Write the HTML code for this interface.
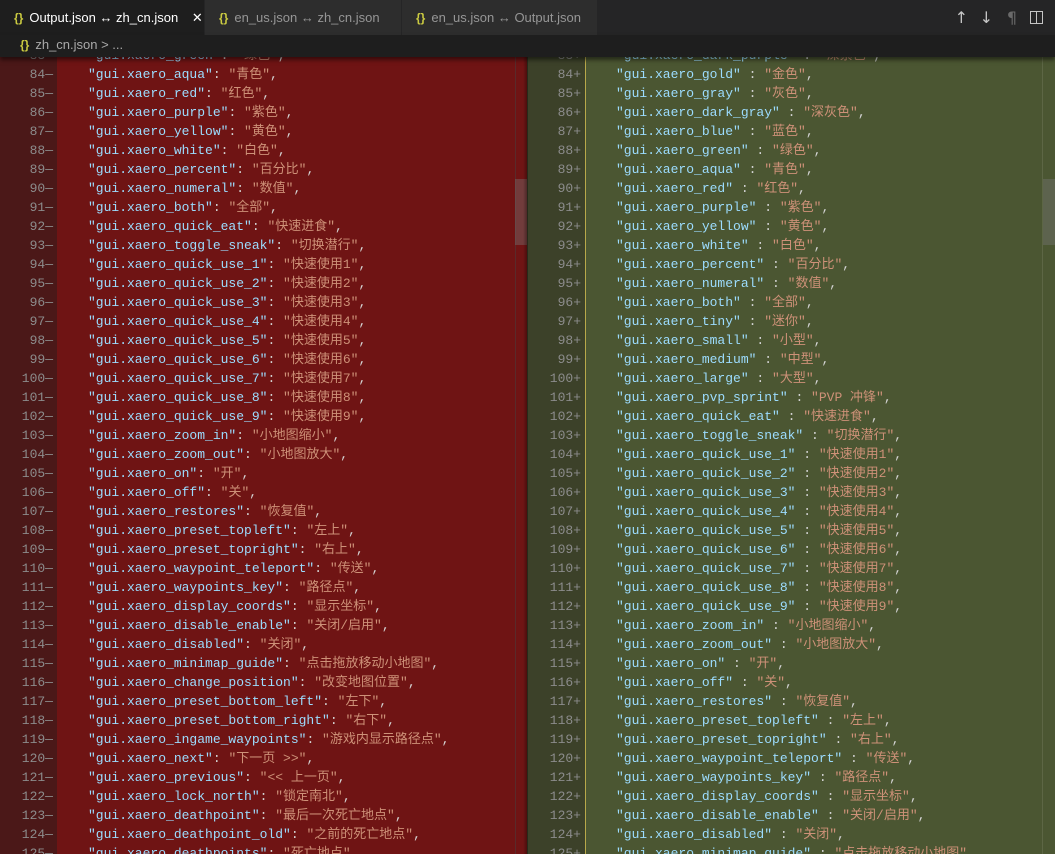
<!DOCTYPE html>
<html><head><meta charset="utf-8"><style>
*{margin:0;padding:0;box-sizing:border-box}
body{width:1055px;height:854px;overflow:hidden;background:#1e1e1e;position:relative;font-family:"Liberation Mono","Noto Sans CJK SC",monospace}
.tabs{position:absolute;left:0;top:0;width:1055px;height:35px;background:#252526}
.tab{position:absolute;top:0;height:35px;background:#2d2d2d;color:#969696;font:13px "Liberation Sans",sans-serif;line-height:35px;padding-left:14px;border-right:1px solid #252526}
.tab.a{background:#1e1e1e;color:#fff}
.br{color:#cbcb41;font-weight:bold;margin-right:6px;font-size:12px}
.crumb{position:absolute;left:0;top:35px;width:1055px;height:22px;background:#1e1e1e;color:#a9a9a9;font:13px "Liberation Sans",sans-serif;line-height:20px;padding-left:20px;z-index:3;box-shadow:0 3px 4px rgba(0,0,0,.5)}
.icons{position:absolute;right:0;top:0;height:35px;color:#c5c5c5;font:16px "DejaVu Sans",sans-serif;line-height:35px}
.pane{position:absolute;top:57px;height:797px;overflow:hidden}
.lines{position:absolute;top:-11px;left:0;right:0}
.l{height:19px;line-height:19px;font-size:13px;white-space:pre;position:relative}
.n{position:absolute;text-align:right;color:#8c8c8c}
.k{color:#9cdcfe}.v{color:#ce9178}.p{color:#d4d4d4}
</style></head><body>
<div class="tabs">
<div class="tab a" style="left:0;width:205px"><span class="br">{}</span>Output.json ↔ zh_cn.json <span style="margin-left:10px">✕</span></div>
<div class="tab" style="left:205px;width:197px"><span class="br">{}</span>en_us.json ↔ zh_cn.json</div>
<div class="tab" style="left:402px;width:196px"><span class="br">{}</span>en_us.json ↔ Output.json</div>
<div class="icons"><span style="position:absolute;right:87px">↑</span><span style="position:absolute;right:62px">↓</span><span style="position:absolute;right:38px;color:#6a6a6a">¶</span><span style="position:absolute;right:12px;top:11px;width:13px;height:13px;border:1.5px solid #c5c5c5"></span><span style="position:absolute;right:18px;top:11px;width:1.5px;height:13px;background:#c5c5c5"></span></div>
</div>
<div class="crumb"><span class="br">{}</span>zh_cn.json &gt; ...</div>

<div class="pane" style="left:0;width:527px;background:#6f1414">
<div style="position:absolute;left:0;top:0;width:57px;height:797px;background:#4b1818"></div>
<div style="position:absolute;left:515px;top:0;width:1px;height:797px;background:#5a2a2a"></div>
<div style="position:absolute;left:515px;top:122px;width:12px;height:66px;background:rgba(121,121,121,.4)"></div>
<div class="lines" style="left:0">
<div class="l"><span class="n" style="left:0;width:53px">83—</span><span style="position:absolute;left:88px"><span class="k">"gui.xaero_green"</span><span class="p">: </span><span class="v">"绿色"</span><span class="p">,</span></span></div>
<div class="l"><span class="n" style="left:0;width:53px">84—</span><span style="position:absolute;left:88px"><span class="k">"gui.xaero_aqua"</span><span class="p">: </span><span class="v">"青色"</span><span class="p">,</span></span></div>
<div class="l"><span class="n" style="left:0;width:53px">85—</span><span style="position:absolute;left:88px"><span class="k">"gui.xaero_red"</span><span class="p">: </span><span class="v">"红色"</span><span class="p">,</span></span></div>
<div class="l"><span class="n" style="left:0;width:53px">86—</span><span style="position:absolute;left:88px"><span class="k">"gui.xaero_purple"</span><span class="p">: </span><span class="v">"紫色"</span><span class="p">,</span></span></div>
<div class="l"><span class="n" style="left:0;width:53px">87—</span><span style="position:absolute;left:88px"><span class="k">"gui.xaero_yellow"</span><span class="p">: </span><span class="v">"黄色"</span><span class="p">,</span></span></div>
<div class="l"><span class="n" style="left:0;width:53px">88—</span><span style="position:absolute;left:88px"><span class="k">"gui.xaero_white"</span><span class="p">: </span><span class="v">"白色"</span><span class="p">,</span></span></div>
<div class="l"><span class="n" style="left:0;width:53px">89—</span><span style="position:absolute;left:88px"><span class="k">"gui.xaero_percent"</span><span class="p">: </span><span class="v">"百分比"</span><span class="p">,</span></span></div>
<div class="l"><span class="n" style="left:0;width:53px">90—</span><span style="position:absolute;left:88px"><span class="k">"gui.xaero_numeral"</span><span class="p">: </span><span class="v">"数值"</span><span class="p">,</span></span></div>
<div class="l"><span class="n" style="left:0;width:53px">91—</span><span style="position:absolute;left:88px"><span class="k">"gui.xaero_both"</span><span class="p">: </span><span class="v">"全部"</span><span class="p">,</span></span></div>
<div class="l"><span class="n" style="left:0;width:53px">92—</span><span style="position:absolute;left:88px"><span class="k">"gui.xaero_quick_eat"</span><span class="p">: </span><span class="v">"快速进食"</span><span class="p">,</span></span></div>
<div class="l"><span class="n" style="left:0;width:53px">93—</span><span style="position:absolute;left:88px"><span class="k">"gui.xaero_toggle_sneak"</span><span class="p">: </span><span class="v">"切换潜行"</span><span class="p">,</span></span></div>
<div class="l"><span class="n" style="left:0;width:53px">94—</span><span style="position:absolute;left:88px"><span class="k">"gui.xaero_quick_use_1"</span><span class="p">: </span><span class="v">"快速使用1"</span><span class="p">,</span></span></div>
<div class="l"><span class="n" style="left:0;width:53px">95—</span><span style="position:absolute;left:88px"><span class="k">"gui.xaero_quick_use_2"</span><span class="p">: </span><span class="v">"快速使用2"</span><span class="p">,</span></span></div>
<div class="l"><span class="n" style="left:0;width:53px">96—</span><span style="position:absolute;left:88px"><span class="k">"gui.xaero_quick_use_3"</span><span class="p">: </span><span class="v">"快速使用3"</span><span class="p">,</span></span></div>
<div class="l"><span class="n" style="left:0;width:53px">97—</span><span style="position:absolute;left:88px"><span class="k">"gui.xaero_quick_use_4"</span><span class="p">: </span><span class="v">"快速使用4"</span><span class="p">,</span></span></div>
<div class="l"><span class="n" style="left:0;width:53px">98—</span><span style="position:absolute;left:88px"><span class="k">"gui.xaero_quick_use_5"</span><span class="p">: </span><span class="v">"快速使用5"</span><span class="p">,</span></span></div>
<div class="l"><span class="n" style="left:0;width:53px">99—</span><span style="position:absolute;left:88px"><span class="k">"gui.xaero_quick_use_6"</span><span class="p">: </span><span class="v">"快速使用6"</span><span class="p">,</span></span></div>
<div class="l"><span class="n" style="left:0;width:53px">100—</span><span style="position:absolute;left:88px"><span class="k">"gui.xaero_quick_use_7"</span><span class="p">: </span><span class="v">"快速使用7"</span><span class="p">,</span></span></div>
<div class="l"><span class="n" style="left:0;width:53px">101—</span><span style="position:absolute;left:88px"><span class="k">"gui.xaero_quick_use_8"</span><span class="p">: </span><span class="v">"快速使用8"</span><span class="p">,</span></span></div>
<div class="l"><span class="n" style="left:0;width:53px">102—</span><span style="position:absolute;left:88px"><span class="k">"gui.xaero_quick_use_9"</span><span class="p">: </span><span class="v">"快速使用9"</span><span class="p">,</span></span></div>
<div class="l"><span class="n" style="left:0;width:53px">103—</span><span style="position:absolute;left:88px"><span class="k">"gui.xaero_zoom_in"</span><span class="p">: </span><span class="v">"小地图缩小"</span><span class="p">,</span></span></div>
<div class="l"><span class="n" style="left:0;width:53px">104—</span><span style="position:absolute;left:88px"><span class="k">"gui.xaero_zoom_out"</span><span class="p">: </span><span class="v">"小地图放大"</span><span class="p">,</span></span></div>
<div class="l"><span class="n" style="left:0;width:53px">105—</span><span style="position:absolute;left:88px"><span class="k">"gui.xaero_on"</span><span class="p">: </span><span class="v">"开"</span><span class="p">,</span></span></div>
<div class="l"><span class="n" style="left:0;width:53px">106—</span><span style="position:absolute;left:88px"><span class="k">"gui.xaero_off"</span><span class="p">: </span><span class="v">"关"</span><span class="p">,</span></span></div>
<div class="l"><span class="n" style="left:0;width:53px">107—</span><span style="position:absolute;left:88px"><span class="k">"gui.xaero_restores"</span><span class="p">: </span><span class="v">"恢复值"</span><span class="p">,</span></span></div>
<div class="l"><span class="n" style="left:0;width:53px">108—</span><span style="position:absolute;left:88px"><span class="k">"gui.xaero_preset_topleft"</span><span class="p">: </span><span class="v">"左上"</span><span class="p">,</span></span></div>
<div class="l"><span class="n" style="left:0;width:53px">109—</span><span style="position:absolute;left:88px"><span class="k">"gui.xaero_preset_topright"</span><span class="p">: </span><span class="v">"右上"</span><span class="p">,</span></span></div>
<div class="l"><span class="n" style="left:0;width:53px">110—</span><span style="position:absolute;left:88px"><span class="k">"gui.xaero_waypoint_teleport"</span><span class="p">: </span><span class="v">"传送"</span><span class="p">,</span></span></div>
<div class="l"><span class="n" style="left:0;width:53px">111—</span><span style="position:absolute;left:88px"><span class="k">"gui.xaero_waypoints_key"</span><span class="p">: </span><span class="v">"路径点"</span><span class="p">,</span></span></div>
<div class="l"><span class="n" style="left:0;width:53px">112—</span><span style="position:absolute;left:88px"><span class="k">"gui.xaero_display_coords"</span><span class="p">: </span><span class="v">"显示坐标"</span><span class="p">,</span></span></div>
<div class="l"><span class="n" style="left:0;width:53px">113—</span><span style="position:absolute;left:88px"><span class="k">"gui.xaero_disable_enable"</span><span class="p">: </span><span class="v">"关闭/启用"</span><span class="p">,</span></span></div>
<div class="l"><span class="n" style="left:0;width:53px">114—</span><span style="position:absolute;left:88px"><span class="k">"gui.xaero_disabled"</span><span class="p">: </span><span class="v">"关闭"</span><span class="p">,</span></span></div>
<div class="l"><span class="n" style="left:0;width:53px">115—</span><span style="position:absolute;left:88px"><span class="k">"gui.xaero_minimap_guide"</span><span class="p">: </span><span class="v">"点击拖放移动小地图"</span><span class="p">,</span></span></div>
<div class="l"><span class="n" style="left:0;width:53px">116—</span><span style="position:absolute;left:88px"><span class="k">"gui.xaero_change_position"</span><span class="p">: </span><span class="v">"改变地图位置"</span><span class="p">,</span></span></div>
<div class="l"><span class="n" style="left:0;width:53px">117—</span><span style="position:absolute;left:88px"><span class="k">"gui.xaero_preset_bottom_left"</span><span class="p">: </span><span class="v">"左下"</span><span class="p">,</span></span></div>
<div class="l"><span class="n" style="left:0;width:53px">118—</span><span style="position:absolute;left:88px"><span class="k">"gui.xaero_preset_bottom_right"</span><span class="p">: </span><span class="v">"右下"</span><span class="p">,</span></span></div>
<div class="l"><span class="n" style="left:0;width:53px">119—</span><span style="position:absolute;left:88px"><span class="k">"gui.xaero_ingame_waypoints"</span><span class="p">: </span><span class="v">"游戏内显示路径点"</span><span class="p">,</span></span></div>
<div class="l"><span class="n" style="left:0;width:53px">120—</span><span style="position:absolute;left:88px"><span class="k">"gui.xaero_next"</span><span class="p">: </span><span class="v">"下一页 &gt;&gt;"</span><span class="p">,</span></span></div>
<div class="l"><span class="n" style="left:0;width:53px">121—</span><span style="position:absolute;left:88px"><span class="k">"gui.xaero_previous"</span><span class="p">: </span><span class="v">"&lt;&lt; 上一页"</span><span class="p">,</span></span></div>
<div class="l"><span class="n" style="left:0;width:53px">122—</span><span style="position:absolute;left:88px"><span class="k">"gui.xaero_lock_north"</span><span class="p">: </span><span class="v">"锁定南北"</span><span class="p">,</span></span></div>
<div class="l"><span class="n" style="left:0;width:53px">123—</span><span style="position:absolute;left:88px"><span class="k">"gui.xaero_deathpoint"</span><span class="p">: </span><span class="v">"最后一次死亡地点"</span><span class="p">,</span></span></div>
<div class="l"><span class="n" style="left:0;width:53px">124—</span><span style="position:absolute;left:88px"><span class="k">"gui.xaero_deathpoint_old"</span><span class="p">: </span><span class="v">"之前的死亡地点"</span><span class="p">,</span></span></div>
<div class="l"><span class="n" style="left:0;width:53px">125—</span><span style="position:absolute;left:88px"><span class="k">"gui.xaero_deathpoints"</span><span class="p">: </span><span class="v">"死亡地点"</span><span class="p">,</span></span></div>
</div>
</div>

<div style="position:absolute;left:523px;top:57px;width:5px;height:797px;background:linear-gradient(90deg,rgba(0,0,0,0),rgba(0,0,0,.4));z-index:2"></div>

<div class="pane" style="left:527px;width:528px;background:#4b5632">
<div style="position:absolute;left:0;top:0;width:58px;height:797px;background:#3c4129"></div>
<div style="position:absolute;left:58px;top:0;width:1px;height:797px;background:#b8a84a"></div>
<div style="position:absolute;left:515px;top:0;width:1px;height:797px;background:#5d6645"></div>
<div style="position:absolute;left:516px;top:122px;width:12px;height:66px;background:rgba(121,121,121,.4)"></div>
<div class="lines">
<div class="l"><span class="n" style="left:0;width:54px">83+</span><span style="position:absolute;left:89px"><span class="k">"gui.xaero_dark_purple"</span><span class="p"> : </span><span class="v">"深紫色"</span><span class="p">,</span></span></div>
<div class="l"><span class="n" style="left:0;width:54px">84+</span><span style="position:absolute;left:89px"><span class="k">"gui.xaero_gold"</span><span class="p"> : </span><span class="v">"金色"</span><span class="p">,</span></span></div>
<div class="l"><span class="n" style="left:0;width:54px">85+</span><span style="position:absolute;left:89px"><span class="k">"gui.xaero_gray"</span><span class="p"> : </span><span class="v">"灰色"</span><span class="p">,</span></span></div>
<div class="l"><span class="n" style="left:0;width:54px">86+</span><span style="position:absolute;left:89px"><span class="k">"gui.xaero_dark_gray"</span><span class="p"> : </span><span class="v">"深灰色"</span><span class="p">,</span></span></div>
<div class="l"><span class="n" style="left:0;width:54px">87+</span><span style="position:absolute;left:89px"><span class="k">"gui.xaero_blue"</span><span class="p"> : </span><span class="v">"蓝色"</span><span class="p">,</span></span></div>
<div class="l"><span class="n" style="left:0;width:54px">88+</span><span style="position:absolute;left:89px"><span class="k">"gui.xaero_green"</span><span class="p"> : </span><span class="v">"绿色"</span><span class="p">,</span></span></div>
<div class="l"><span class="n" style="left:0;width:54px">89+</span><span style="position:absolute;left:89px"><span class="k">"gui.xaero_aqua"</span><span class="p"> : </span><span class="v">"青色"</span><span class="p">,</span></span></div>
<div class="l"><span class="n" style="left:0;width:54px">90+</span><span style="position:absolute;left:89px"><span class="k">"gui.xaero_red"</span><span class="p"> : </span><span class="v">"红色"</span><span class="p">,</span></span></div>
<div class="l"><span class="n" style="left:0;width:54px">91+</span><span style="position:absolute;left:89px"><span class="k">"gui.xaero_purple"</span><span class="p"> : </span><span class="v">"紫色"</span><span class="p">,</span></span></div>
<div class="l"><span class="n" style="left:0;width:54px">92+</span><span style="position:absolute;left:89px"><span class="k">"gui.xaero_yellow"</span><span class="p"> : </span><span class="v">"黄色"</span><span class="p">,</span></span></div>
<div class="l"><span class="n" style="left:0;width:54px">93+</span><span style="position:absolute;left:89px"><span class="k">"gui.xaero_white"</span><span class="p"> : </span><span class="v">"白色"</span><span class="p">,</span></span></div>
<div class="l"><span class="n" style="left:0;width:54px">94+</span><span style="position:absolute;left:89px"><span class="k">"gui.xaero_percent"</span><span class="p"> : </span><span class="v">"百分比"</span><span class="p">,</span></span></div>
<div class="l"><span class="n" style="left:0;width:54px">95+</span><span style="position:absolute;left:89px"><span class="k">"gui.xaero_numeral"</span><span class="p"> : </span><span class="v">"数值"</span><span class="p">,</span></span></div>
<div class="l"><span class="n" style="left:0;width:54px">96+</span><span style="position:absolute;left:89px"><span class="k">"gui.xaero_both"</span><span class="p"> : </span><span class="v">"全部"</span><span class="p">,</span></span></div>
<div class="l"><span class="n" style="left:0;width:54px">97+</span><span style="position:absolute;left:89px"><span class="k">"gui.xaero_tiny"</span><span class="p"> : </span><span class="v">"迷你"</span><span class="p">,</span></span></div>
<div class="l"><span class="n" style="left:0;width:54px">98+</span><span style="position:absolute;left:89px"><span class="k">"gui.xaero_small"</span><span class="p"> : </span><span class="v">"小型"</span><span class="p">,</span></span></div>
<div class="l"><span class="n" style="left:0;width:54px">99+</span><span style="position:absolute;left:89px"><span class="k">"gui.xaero_medium"</span><span class="p"> : </span><span class="v">"中型"</span><span class="p">,</span></span></div>
<div class="l"><span class="n" style="left:0;width:54px">100+</span><span style="position:absolute;left:89px"><span class="k">"gui.xaero_large"</span><span class="p"> : </span><span class="v">"大型"</span><span class="p">,</span></span></div>
<div class="l"><span class="n" style="left:0;width:54px">101+</span><span style="position:absolute;left:89px"><span class="k">"gui.xaero_pvp_sprint"</span><span class="p"> : </span><span class="v">"PVP 冲锋"</span><span class="p">,</span></span></div>
<div class="l"><span class="n" style="left:0;width:54px">102+</span><span style="position:absolute;left:89px"><span class="k">"gui.xaero_quick_eat"</span><span class="p"> : </span><span class="v">"快速进食"</span><span class="p">,</span></span></div>
<div class="l"><span class="n" style="left:0;width:54px">103+</span><span style="position:absolute;left:89px"><span class="k">"gui.xaero_toggle_sneak"</span><span class="p"> : </span><span class="v">"切换潜行"</span><span class="p">,</span></span></div>
<div class="l"><span class="n" style="left:0;width:54px">104+</span><span style="position:absolute;left:89px"><span class="k">"gui.xaero_quick_use_1"</span><span class="p"> : </span><span class="v">"快速使用1"</span><span class="p">,</span></span></div>
<div class="l"><span class="n" style="left:0;width:54px">105+</span><span style="position:absolute;left:89px"><span class="k">"gui.xaero_quick_use_2"</span><span class="p"> : </span><span class="v">"快速使用2"</span><span class="p">,</span></span></div>
<div class="l"><span class="n" style="left:0;width:54px">106+</span><span style="position:absolute;left:89px"><span class="k">"gui.xaero_quick_use_3"</span><span class="p"> : </span><span class="v">"快速使用3"</span><span class="p">,</span></span></div>
<div class="l"><span class="n" style="left:0;width:54px">107+</span><span style="position:absolute;left:89px"><span class="k">"gui.xaero_quick_use_4"</span><span class="p"> : </span><span class="v">"快速使用4"</span><span class="p">,</span></span></div>
<div class="l"><span class="n" style="left:0;width:54px">108+</span><span style="position:absolute;left:89px"><span class="k">"gui.xaero_quick_use_5"</span><span class="p"> : </span><span class="v">"快速使用5"</span><span class="p">,</span></span></div>
<div class="l"><span class="n" style="left:0;width:54px">109+</span><span style="position:absolute;left:89px"><span class="k">"gui.xaero_quick_use_6"</span><span class="p"> : </span><span class="v">"快速使用6"</span><span class="p">,</span></span></div>
<div class="l"><span class="n" style="left:0;width:54px">110+</span><span style="position:absolute;left:89px"><span class="k">"gui.xaero_quick_use_7"</span><span class="p"> : </span><span class="v">"快速使用7"</span><span class="p">,</span></span></div>
<div class="l"><span class="n" style="left:0;width:54px">111+</span><span style="position:absolute;left:89px"><span class="k">"gui.xaero_quick_use_8"</span><span class="p"> : </span><span class="v">"快速使用8"</span><span class="p">,</span></span></div>
<div class="l"><span class="n" style="left:0;width:54px">112+</span><span style="position:absolute;left:89px"><span class="k">"gui.xaero_quick_use_9"</span><span class="p"> : </span><span class="v">"快速使用9"</span><span class="p">,</span></span></div>
<div class="l"><span class="n" style="left:0;width:54px">113+</span><span style="position:absolute;left:89px"><span class="k">"gui.xaero_zoom_in"</span><span class="p"> : </span><span class="v">"小地图缩小"</span><span class="p">,</span></span></div>
<div class="l"><span class="n" style="left:0;width:54px">114+</span><span style="position:absolute;left:89px"><span class="k">"gui.xaero_zoom_out"</span><span class="p"> : </span><span class="v">"小地图放大"</span><span class="p">,</span></span></div>
<div class="l"><span class="n" style="left:0;width:54px">115+</span><span style="position:absolute;left:89px"><span class="k">"gui.xaero_on"</span><span class="p"> : </span><span class="v">"开"</span><span class="p">,</span></span></div>
<div class="l"><span class="n" style="left:0;width:54px">116+</span><span style="position:absolute;left:89px"><span class="k">"gui.xaero_off"</span><span class="p"> : </span><span class="v">"关"</span><span class="p">,</span></span></div>
<div class="l"><span class="n" style="left:0;width:54px">117+</span><span style="position:absolute;left:89px"><span class="k">"gui.xaero_restores"</span><span class="p"> : </span><span class="v">"恢复值"</span><span class="p">,</span></span></div>
<div class="l"><span class="n" style="left:0;width:54px">118+</span><span style="position:absolute;left:89px"><span class="k">"gui.xaero_preset_topleft"</span><span class="p"> : </span><span class="v">"左上"</span><span class="p">,</span></span></div>
<div class="l"><span class="n" style="left:0;width:54px">119+</span><span style="position:absolute;left:89px"><span class="k">"gui.xaero_preset_topright"</span><span class="p"> : </span><span class="v">"右上"</span><span class="p">,</span></span></div>
<div class="l"><span class="n" style="left:0;width:54px">120+</span><span style="position:absolute;left:89px"><span class="k">"gui.xaero_waypoint_teleport"</span><span class="p"> : </span><span class="v">"传送"</span><span class="p">,</span></span></div>
<div class="l"><span class="n" style="left:0;width:54px">121+</span><span style="position:absolute;left:89px"><span class="k">"gui.xaero_waypoints_key"</span><span class="p"> : </span><span class="v">"路径点"</span><span class="p">,</span></span></div>
<div class="l"><span class="n" style="left:0;width:54px">122+</span><span style="position:absolute;left:89px"><span class="k">"gui.xaero_display_coords"</span><span class="p"> : </span><span class="v">"显示坐标"</span><span class="p">,</span></span></div>
<div class="l"><span class="n" style="left:0;width:54px">123+</span><span style="position:absolute;left:89px"><span class="k">"gui.xaero_disable_enable"</span><span class="p"> : </span><span class="v">"关闭/启用"</span><span class="p">,</span></span></div>
<div class="l"><span class="n" style="left:0;width:54px">124+</span><span style="position:absolute;left:89px"><span class="k">"gui.xaero_disabled"</span><span class="p"> : </span><span class="v">"关闭"</span><span class="p">,</span></span></div>
<div class="l"><span class="n" style="left:0;width:54px">125+</span><span style="position:absolute;left:89px"><span class="k">"gui.xaero_minimap_guide"</span><span class="p"> : </span><span class="v">"点击拖放移动小地图"</span><span class="p">,</span></span></div>
</div>
</div>
</body></html>
